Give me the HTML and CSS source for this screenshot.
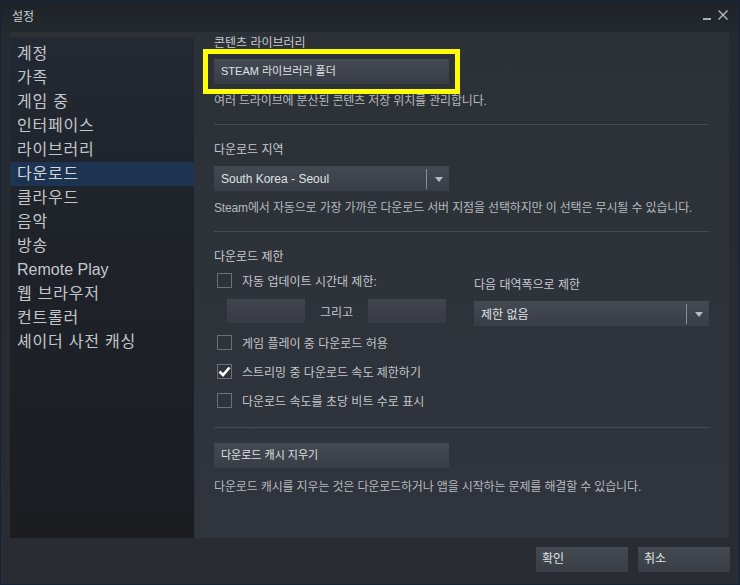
FILE: index.html
```html
<!DOCTYPE html>
<html lang="ko">
<head>
  <meta charset="UTF-8" />
  <title>설정</title>
  <link rel="stylesheet" href="styles.css">
</head>
<body>
  <div class="window">
    <!-- Title bar -->
    <div class="titlebar">
      <span class="title">설정</span>
      <div class="win-controls">
        <span class="win-min"></span>
        <svg class="win-close" width="10" height="10" viewBox="0 0 10 10">
          <path d="M0.5 0.5 L9.5 9.5 M9.5 0.5 L0.5 9.5" stroke="#b9bcc1" stroke-width="1.4" fill="none" />
        </svg>
      </div>
    </div>

    <div class="main">
      <!-- Sidebar -->
      <ul class="sidebar">
        <li>계정</li>
        <li>가족</li>
        <li>게임 중</li>
        <li>인터페이스</li>
        <li>라이브러리</li>
        <li class="active">다운로드</li>
        <li>클라우드</li>
        <li>음악</li>
        <li>방송</li>
        <li class="latin">Remote Play</li>
        <li>웹 브라우저</li>
        <li>컨트롤러</li>
        <li>셰이더 사전 캐싱</li>
      </ul>

      <!-- Content -->
      <div class="content">
        <div class="label first">콘텐츠 라이브러리</div>
        <div class="btn-wrap">
          <div class="btn">STEAM 라이브러리 폴더</div>
          <div class="highlight"></div>
        </div>
        <div class="desc">여러 드라이브에 분산된 콘텐츠 저장 위치를 관리합니다.</div>

        <div class="sep"></div>

        <div class="label">다운로드 지역</div>
        <div class="select">
          <span class="select-text">South Korea - Seoul</span>
          <span class="select-bar"></span>
          <span class="select-arrow"></span>
        </div>
        <div class="desc">Steam에서 자동으로 가장 가까운 다운로드 서버 지점을 선택하지만 이 선택은 무시될 수 있습니다.</div>

        <div class="sep"></div>

        <div class="label">다운로드 제한</div>
        <div class="limit-grid">
          <div class="limit-left">
            <div class="check-row first-check">
              <span class="checkbox"></span>
              <span>자동 업데이트 시간대 제한:</span>
            </div>
            <div class="time-row">
              <span class="time-input"></span>
              <span class="time-and">그리고</span>
              <span class="time-input"></span>
            </div>
          </div>
          <div class="limit-right">
            <div class="right-label">다음 대역폭으로 제한</div>
            <div class="select">
              <span class="select-text">제한 없음</span>
              <span class="select-bar"></span>
              <span class="select-arrow"></span>
            </div>
          </div>
        </div>

        <div class="check-row">
          <span class="checkbox"></span>
          <span>게임 플레이 중 다운로드 허용</span>
        </div>
        <div class="check-row">
          <span class="checkbox">
            <svg width="13" height="11" viewBox="0 0 13 11">
              <path d="M1.5 5.5 L5 9 L11.5 1.5" stroke="#ffffff" stroke-width="2.6" fill="none" />
            </svg>
          </span>
          <span>스트리밍 중 다운로드 속도 제한하기</span>
        </div>
        <div class="check-row">
          <span class="checkbox"></span>
          <span>다운로드 속도를 초당 비트 수로 표시</span>
        </div>

        <div class="sep sep-last"></div>

        <div class="btn">다운로드 캐시 지우기</div>
        <div class="desc desc-last">다운로드 캐시를 지우는 것은 다운로드하거나 앱을 시작하는 문제를 해결할 수 있습니다.</div>
      </div>
    </div>

    <!-- Footer -->
    <div class="footer">
      <div class="footer-btn">확인</div>
      <div class="footer-btn">취소</div>
    </div>
  </div>
</body>
</html>
```

FILE: styles.css
```css
* {
  margin: 0;
  padding: 0;
  box-sizing: border-box;
}
body {
  background: #1a1d22;
  font-family: "Liberation Sans", "Noto Sans CJK KR", sans-serif;
  color: #c6cad0;
}
/* Window frame */
.window {
  width: 740px;
  height: 585px;
  border: 1px solid #15233a;
  background: linear-gradient(to bottom, #1e2229 0px, #262a31 40px, #292c32 100%);
  display: flex;
  flex-direction: column;
}
.titlebar {
  height: 31px;
  display: flex;
  align-items: center;
  justify-content: space-between;
  padding: 0 11px;
}
.title {
  font-size: 12px;
  color: #c8ccd2;
  margin-top: -3px;
}
.win-controls {
  display: flex;
  align-items: center;
  gap: 7px;
  margin-top: -4px;
}
.win-min {
  width: 8px;
  height: 2px;
  background: #a9acb1;
  margin-top: 9px;
}
/* Main area */
.main {
  display: flex;
  height: 506px;
  margin: 0 10px 0 9px;
}
.sidebar {
  list-style: none;
  width: 184px;
  padding-top: 4px;
  border-top: 6px solid #2d3036;
  background: linear-gradient(to bottom, #232833 0%, #1f232a 35%, #1b1d21 100%);
}
.sidebar li {
  height: 24px;
  line-height: 24px;
  padding-left: 7px;
  font-size: 16px;
  letter-spacing: 0.8px;
  color: #c3c7cc;
}
.sidebar li.latin {
  letter-spacing: 0;
}
.sidebar li.active {
  background: #1c3452;
  color: #d4d8dd;
}
.content {
  flex: 1;
  padding: 4px 20px 0 20px;
  background: linear-gradient(to bottom, #2c3037 0%, #30343c 100%);
}
.label {
  font-size: 12px;
  line-height: 14px;
  color: #c6cad0;
  margin-top: 18px;
}
.label.first {
  margin-top: 0;
}
.btn-wrap {
  position: relative;
  width: 235px;
  margin-top: 9px;
}
.btn {
  width: 235px;
  height: 25px;
  line-height: 25px;
  padding-left: 7px;
  font-size: 11px;
  color: #dfe2e6;
  background: linear-gradient(to bottom, #454952 0%, #393d45 100%);
}
.highlight {
  position: absolute;
  left: -11px;
  top: -10px;
  right: -11px;
  bottom: -10px;
  border: 5px solid #ffff00;
}
.desc {
  font-size: 12px;
  line-height: 16px;
  letter-spacing: -0.15px;
  color: #b5b9bf;
  margin-top: 9px;
}
.desc-last {
  margin-top: 11px;
}
.sep {
  height: 1px;
  background: #464a51;
  margin-top: 15px;
}
.sep-last {
  margin-top: 12px;
  margin-bottom: 15px;
}
/* Dropdown */
.select {
  width: 235px;
  height: 25px;
  margin-top: 9px;
  display: flex;
  align-items: center;
  background: linear-gradient(to bottom, #454952 0%, #393d45 100%);
}
.select-text {
  flex: 1;
  padding-left: 7px;
  font-size: 12px;
  color: #dfe2e6;
}
.select-bar {
  width: 1px;
  height: 20px;
  background: #8a8d92;
}
.select-arrow {
  width: 0;
  height: 0;
  margin: 1px 6px 0 8px;
  border-left: 4px solid transparent;
  border-right: 4px solid transparent;
  border-top: 5px solid #b7babf;
}
/* Download limits */
.limit-grid {
  display: grid;
  grid-template-columns: 260px 235px;
}
.limit-right {
  padding-top: 13px;
}
.right-label {
  font-size: 12px;
  line-height: 16px;
  color: #c6cad0;
}
.limit-right .select {
  margin-top: 8px;
}
.check-row {
  display: flex;
  align-items: center;
  height: 29px;
  font-size: 12px;
  color: #c3c7cc;
}
.check-row.first-check {
  margin-top: 2px;
}
.checkbox {
  width: 15px;
  height: 15px;
  margin: 0 10px 0 3px;
  border: 1px solid #6c7076;
  display: flex;
  align-items: center;
  justify-content: center;
}
.time-row {
  display: flex;
  align-items: center;
  padding-left: 13px;
  margin-top: 4px;
  margin-bottom: 5px;
}
.time-input {
  width: 78px;
  height: 24px;
  background: linear-gradient(to bottom, #41454d 0%, #373a42 100%);
}
.time-and {
  width: 63px;
  text-align: center;
  font-size: 12px;
  color: #c3c7cc;
}
/* Footer */
.footer {
  flex: 1;
  display: flex;
  justify-content: flex-end;
  align-items: center;
  gap: 10px;
  padding-right: 9px;
  padding-bottom: 3px;
}
.footer-btn {
  width: 92px;
  height: 25px;
  line-height: 25px;
  padding-left: 6px;
  font-size: 12px;
  color: #dfe2e6;
  background: linear-gradient(to bottom, #454952 0%, #393d45 100%);
}
```
